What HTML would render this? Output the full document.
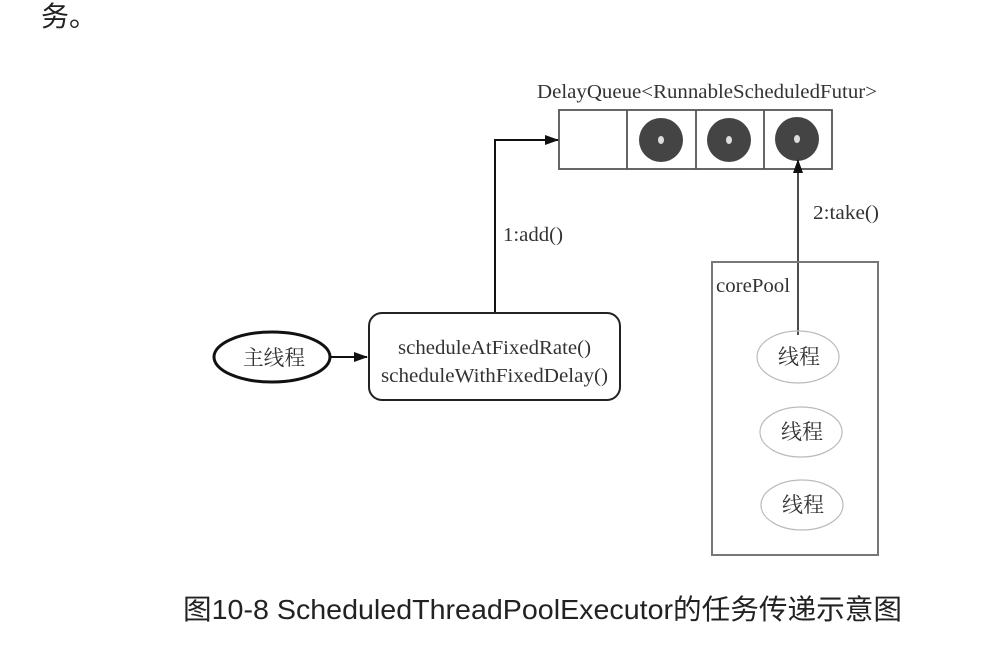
<!DOCTYPE html>
<html><head><meta charset="utf-8">
<style>
html,body{margin:0;padding:0;background:#fff;width:998px;height:659px;overflow:hidden}
.t{position:absolute;font-family:"Liberation Sans","Noto Sans CJK SC",sans-serif;color:#222;white-space:nowrap}
</style></head><body>
<div class="t" style="left:41px;top:-5px;font-size:28px;">务。</div>
<svg width="998" height="659" style="position:absolute;left:0;top:0" font-family="'Liberation Serif','Noto Serif CJK SC',serif">
<defs><marker id="a" markerWidth="14" markerHeight="10" refX="13" refY="5" orient="auto" markerUnits="userSpaceOnUse"><path d="M0,0 L14,5 L0,10z" fill="#111"/></marker></defs>
<text x="537" y="98" font-size="20" fill="#333" textLength="340" lengthAdjust="spacingAndGlyphs">DelayQueue&lt;RunnableScheduledFutur&gt;</text>
<rect x="559" y="110" width="273" height="59" fill="none" stroke="#555" stroke-width="1.8"/>
<line x1="627" y1="110" x2="627" y2="169" stroke="#555" stroke-width="1.8"/>
<line x1="696" y1="110" x2="696" y2="169" stroke="#555" stroke-width="1.8"/>
<line x1="764" y1="110" x2="764" y2="169" stroke="#555" stroke-width="1.8"/>
<circle cx="661" cy="140" r="22" fill="#444"/><ellipse cx="661" cy="140" rx="3" ry="4" fill="#ddd"/>
<circle cx="729" cy="140" r="22" fill="#444"/><ellipse cx="729" cy="140" rx="3" ry="4" fill="#ddd"/>
<circle cx="797" cy="139" r="22" fill="#444"/><ellipse cx="797" cy="139" rx="3" ry="4" fill="#ddd"/>
<polyline points="495,313 495,140 558,140" fill="none" stroke="#111" stroke-width="2" marker-end="url(#a)"/>
<line x1="798" y1="335" x2="798" y2="160" stroke="#111" stroke-width="1.5" marker-end="url(#a)"/>
<text x="503" y="241" font-size="20" fill="#333" textLength="60" lengthAdjust="spacingAndGlyphs">1:add()</text>
<text x="813" y="219" font-size="20" fill="#333" textLength="66" lengthAdjust="spacingAndGlyphs">2:take()</text>
<rect x="369" y="313" width="251" height="87" rx="13" fill="none" stroke="#222" stroke-width="2"/>
<text x="398" y="354" font-size="20" fill="#333" textLength="193" lengthAdjust="spacingAndGlyphs">scheduleAtFixedRate()</text>
<text x="381" y="382" font-size="20" fill="#333" textLength="227" lengthAdjust="spacingAndGlyphs">scheduleWithFixedDelay()</text>
<ellipse cx="272" cy="357" rx="58" ry="25" fill="none" stroke="#111" stroke-width="3"/>
<text x="243" y="365" font-size="21" fill="#333" textLength="62" lengthAdjust="spacingAndGlyphs">主线程</text>
<line x1="331" y1="357" x2="367" y2="357" stroke="#111" stroke-width="2" marker-end="url(#a)"/>
<rect x="712" y="262" width="166" height="293" fill="none" stroke="#777" stroke-width="2"/>
<text x="716" y="292" font-size="20" fill="#333" textLength="74" lengthAdjust="spacingAndGlyphs">corePool</text>
<ellipse cx="798" cy="357" rx="41" ry="26" fill="none" stroke="#bbb" stroke-width="1.2"/>
<text x="778" y="364" font-size="21" fill="#333" textLength="42" lengthAdjust="spacingAndGlyphs">线程</text>
<ellipse cx="801" cy="432" rx="41" ry="25" fill="none" stroke="#bbb" stroke-width="1.2"/>
<text x="781" y="439" font-size="21" fill="#333" textLength="42" lengthAdjust="spacingAndGlyphs">线程</text>
<ellipse cx="802" cy="505" rx="41" ry="25" fill="none" stroke="#bbb" stroke-width="1.2"/>
<text x="782" y="512" font-size="21" fill="#333" textLength="42" lengthAdjust="spacingAndGlyphs">线程</text>
<text x="183" y="619" font-size="28" fill="#222" font-family="'Liberation Sans','Noto Sans CJK SC',sans-serif" textLength="719" lengthAdjust="spacingAndGlyphs">图10-8 ScheduledThreadPoolExecutor的任务传递示意图</text>
</svg>
</body></html>
